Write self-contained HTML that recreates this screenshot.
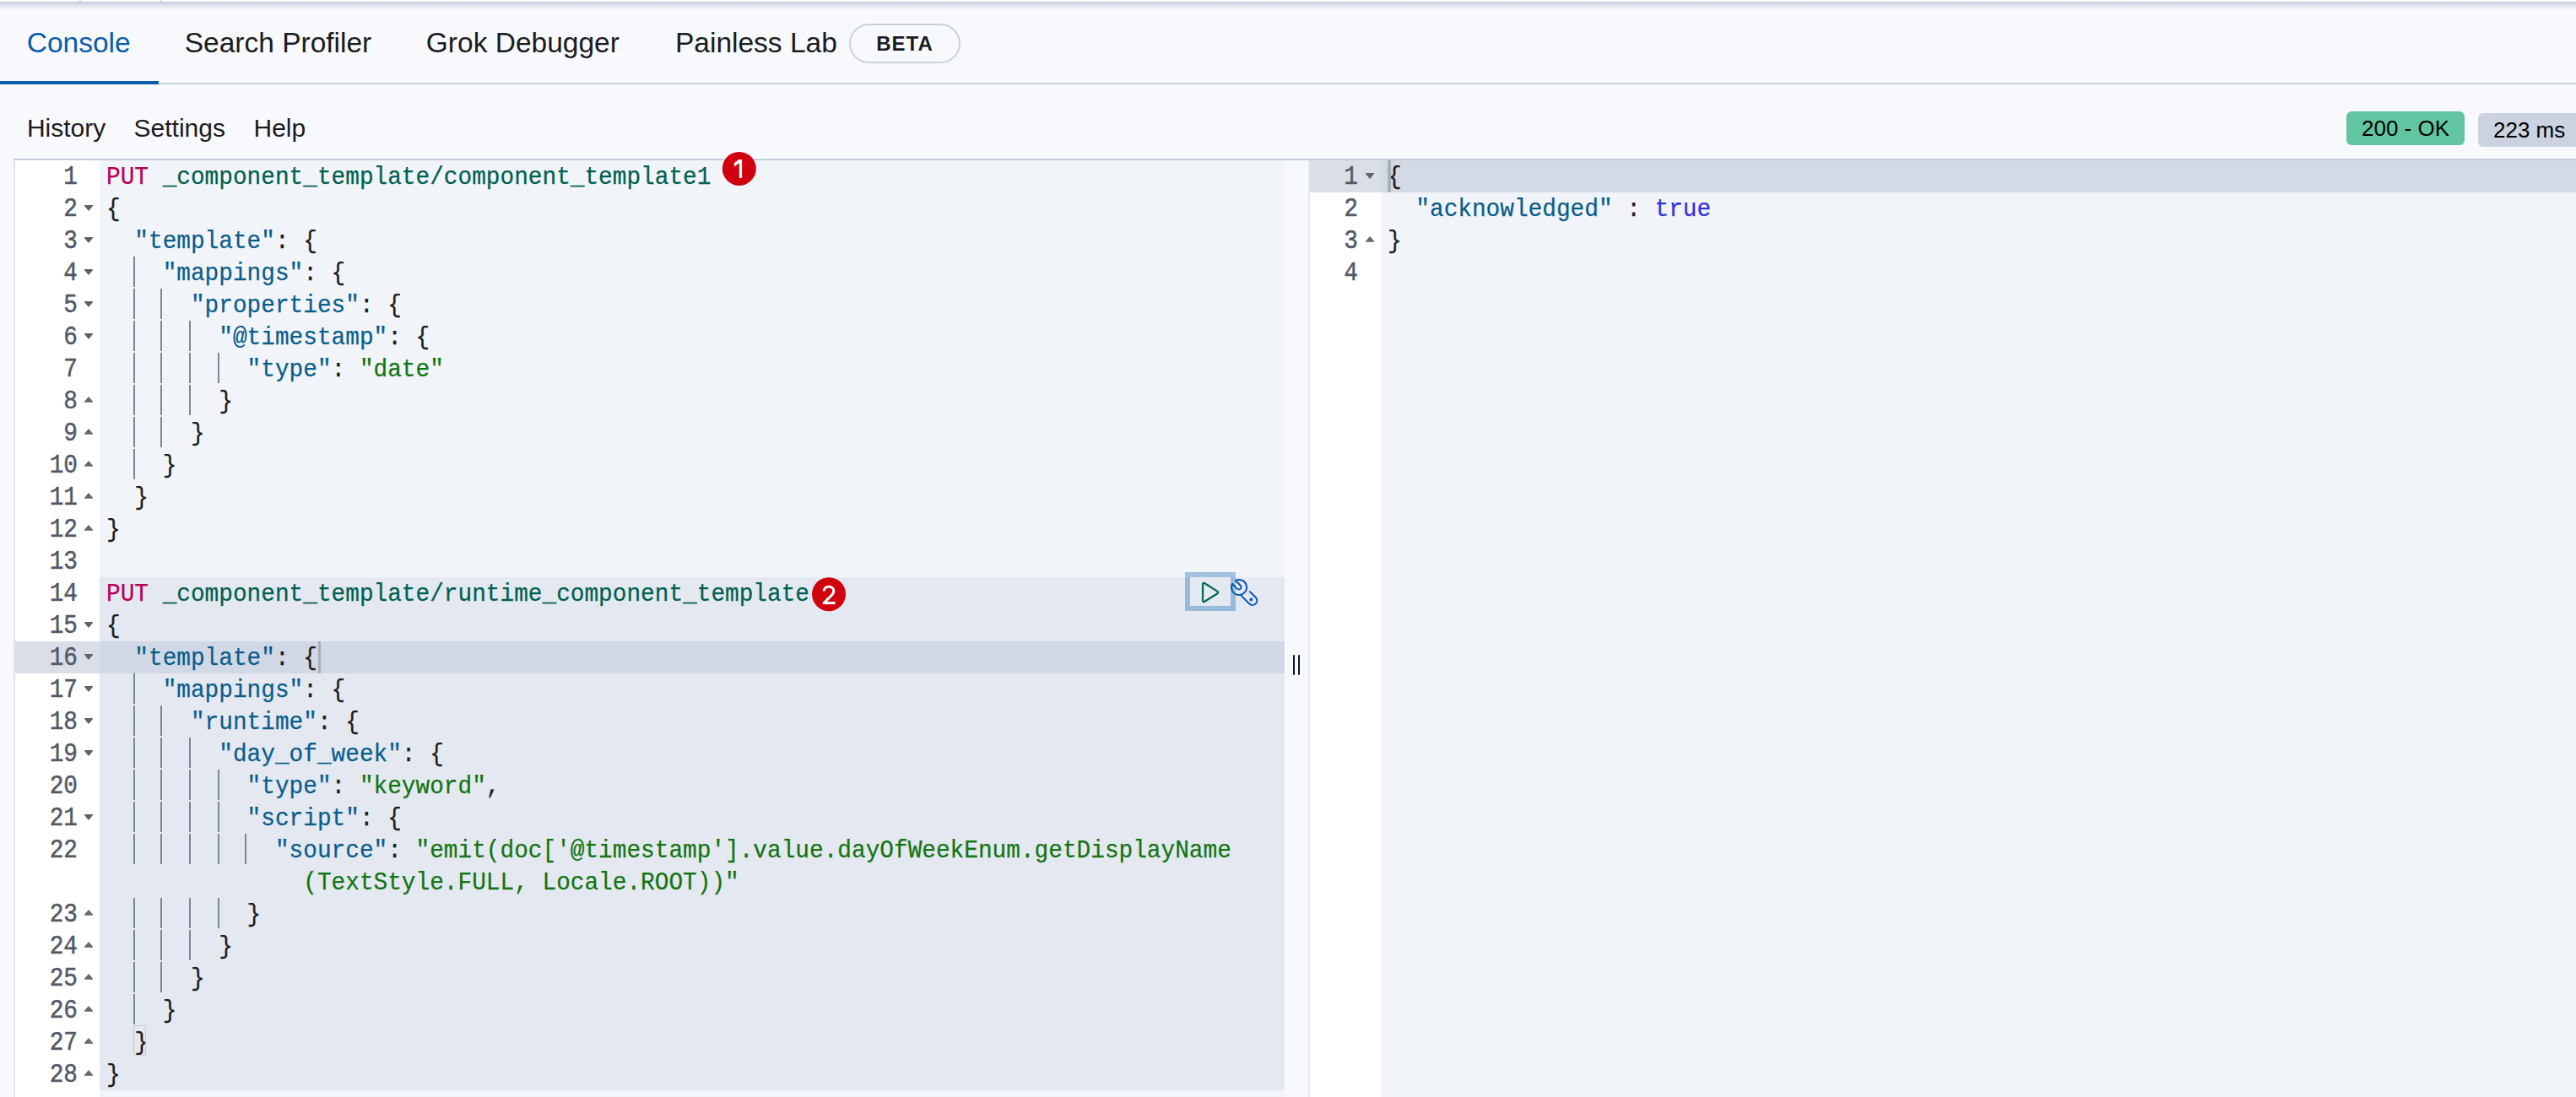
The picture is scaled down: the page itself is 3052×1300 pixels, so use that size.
<!DOCTYPE html>
<html><head><meta charset="utf-8">
<style>
*{margin:0;padding:0;box-sizing:border-box}
html,body{width:3052px;height:1300px;overflow:hidden;background:#f8f9fc;position:relative;font-family:"Liberation Sans",sans-serif}
.a{position:absolute}
.mono{-webkit-text-stroke:0.25px currentColor;font-family:"Liberation Mono",monospace;font-size:29.5px;line-height:38px;white-space:pre}
.ln{position:absolute;height:38px;left:0;top:0}
.tx{position:absolute;white-space:pre;transform-origin:0 0;transform:scaleX(0.9411)}
.num{position:absolute;width:80px;text-align:right;color:#535966;white-space:pre;transform-origin:100% 28px;transform:scale(0.9411,1.08);-webkit-text-stroke:0.45px #535a68}
.g{position:absolute;width:2px;height:36px;background:#7d879a}
.fd,.fu{position:absolute;width:12px;height:9px}
.badge{position:absolute;width:40px;height:40px;border-radius:50%;background:#d0000f;color:#fff;font-weight:bold;font-size:30px;line-height:40px;text-align:center}
</style></head><body>

<div class="a" style="left:0;top:0;width:3052px;height:3px;background:#fff"></div>
<div class="a" style="left:94px;top:0;width:2px;height:3px;background:#d3dae6"></div>
<div class="a" style="left:190px;top:0;width:2px;height:3px;background:#d3dae6"></div>
<div class="a" style="left:0;top:2px;width:3052px;height:2px;background:#c5cedc"></div>
<div class="a" style="left:0;top:4px;width:3052px;height:8px;background:linear-gradient(#d5dbe6,#f8f9fc)"></div>
<div class="a" style="left:31.7px;top:27.5px;font-size:33.5px;line-height:46px;color:#0b5cad;white-space:pre">Console</div>
<div class="a" style="left:218.7px;top:27.5px;font-size:33.5px;line-height:46px;color:#1a1c21;white-space:pre">Search Profiler</div>
<div class="a" style="left:504.8px;top:27.5px;font-size:33.5px;line-height:46px;color:#1a1c21;white-space:pre">Grok Debugger</div>
<div class="a" style="left:800.0px;top:27.5px;font-size:33.5px;line-height:46px;color:#1a1c21;white-space:pre">Painless Lab</div>
<div class="a" style="left:1006px;top:28px;width:132px;height:47px;border:2px solid #c9d1df;border-radius:24px;font-weight:bold;font-size:24px;line-height:43px;text-align:center;color:#1a1c21;letter-spacing:1px">BETA</div>
<div class="a" style="left:0;top:98px;width:3052px;height:2px;background:#c9d1df"></div>
<div class="a" style="left:0;top:96px;width:188px;height:4px;background:#0b5cad"></div>
<div class="a" style="left:31.9px;top:131.5px;font-size:30px;line-height:40px;color:#1a1c21;white-space:pre">History</div>
<div class="a" style="left:158.6px;top:131.5px;font-size:30px;line-height:40px;color:#1a1c21;white-space:pre">Settings</div>
<div class="a" style="left:300.5px;top:131.5px;font-size:30px;line-height:40px;color:#1a1c21;white-space:pre">Help</div>
<div class="a" style="left:2780px;top:132px;width:140px;height:40px;border-radius:6px;background:#61c5a2;color:#000;font-size:26px;line-height:40px;text-align:center;white-space:pre">200 - OK</div>
<div class="a" style="left:2936px;top:134px;width:130px;height:40px;border-radius:6px;background:#cbd2e0;color:#000;font-size:26px;line-height:40px;white-space:pre;padding-left:18px">223 ms</div>
<div class="a" style="left:16px;top:188px;width:3036px;height:2px;background:#c6cfdd"></div>
<div class="a" style="left:16px;top:190px;width:2px;height:1110px;background:#e0e5ed"></div>
<div class="a" style="left:18px;top:190px;width:100px;height:1110px;background:#fff"></div>
<div class="a" style="left:118px;top:190px;width:1404px;height:1110px;background:#f1f4f9"></div>
<div class="a" style="left:118px;top:684px;width:1404px;height:608px;background:#e4e8f0"></div>
<div class="a" style="left:18px;top:760px;width:100px;height:38px;background:#d9dee8"></div>
<div class="a" style="left:118px;top:760px;width:1404px;height:38px;background:#d1d8e5"></div>
<div class="a" style="left:1550px;top:190px;width:2px;height:1110px;background:#e3e7ef"></div>
<div class="a" style="left:1552px;top:190px;width:84px;height:1110px;background:#fff"></div>
<div class="a" style="left:1636px;top:190px;width:1416px;height:1110px;background:#f1f4f9"></div>
<div class="a" style="left:1552px;top:190px;width:84px;height:38px;background:#d9dee8"></div>
<div class="a" style="left:1636px;top:190px;width:1416px;height:38px;background:#d3dae6"></div>
<div class="mono num" style="left:12px;top:191.0px">1</div>
<div class="mono tx" style="left:126.00px;top:191.0px"><span style="color:#b9005a">PUT</span><span style="color:#1a1c21"> </span><span style="color:#00604f">_component_template/component_template1</span></div>
<div class="mono num" style="left:12px;top:229.0px">2</div>
<svg class="fd" style="left:99px;top:242.4px" width="12" height="9" viewBox="0 0 12 9"><path d="M1.5 1.5 L10.5 1.5 L6 7 Z" fill="#626262" stroke="#626262" stroke-width="1.2" stroke-linejoin="round"/></svg>
<div class="mono tx" style="left:126.00px;top:229.0px"><span style="color:#1a1c21">{</span></div>
<div class="mono num" style="left:12px;top:267.0px">3</div>
<svg class="fd" style="left:99px;top:280.4px" width="12" height="9" viewBox="0 0 12 9"><path d="M1.5 1.5 L10.5 1.5 L6 7 Z" fill="#626262" stroke="#626262" stroke-width="1.2" stroke-linejoin="round"/></svg>
<div class="mono tx" style="left:126.00px;top:267.0px"><span style="color:#1a1c21">  </span><span style="color:#0a5d8c">&quot;template&quot;</span><span style="color:#1a1c21">: {</span></div>
<div class="mono num" style="left:12px;top:305.0px">4</div>
<svg class="fd" style="left:99px;top:318.4px" width="12" height="9" viewBox="0 0 12 9"><path d="M1.5 1.5 L10.5 1.5 L6 7 Z" fill="#626262" stroke="#626262" stroke-width="1.2" stroke-linejoin="round"/></svg>
<div class="g" style="left:158px;top:304px"></div>
<div class="mono tx" style="left:126.00px;top:305.0px"><span style="color:#1a1c21">    </span><span style="color:#0a5d8c">&quot;mappings&quot;</span><span style="color:#1a1c21">: {</span></div>
<div class="mono num" style="left:12px;top:343.0px">5</div>
<svg class="fd" style="left:99px;top:356.4px" width="12" height="9" viewBox="0 0 12 9"><path d="M1.5 1.5 L10.5 1.5 L6 7 Z" fill="#626262" stroke="#626262" stroke-width="1.2" stroke-linejoin="round"/></svg>
<div class="g" style="left:158px;top:342px"></div>
<div class="g" style="left:190px;top:342px"></div>
<div class="mono tx" style="left:126.00px;top:343.0px"><span style="color:#1a1c21">      </span><span style="color:#0a5d8c">&quot;properties&quot;</span><span style="color:#1a1c21">: {</span></div>
<div class="mono num" style="left:12px;top:381.0px">6</div>
<svg class="fd" style="left:99px;top:394.4px" width="12" height="9" viewBox="0 0 12 9"><path d="M1.5 1.5 L10.5 1.5 L6 7 Z" fill="#626262" stroke="#626262" stroke-width="1.2" stroke-linejoin="round"/></svg>
<div class="g" style="left:158px;top:380px"></div>
<div class="g" style="left:190px;top:380px"></div>
<div class="g" style="left:224px;top:380px"></div>
<div class="mono tx" style="left:126.00px;top:381.0px"><span style="color:#1a1c21">        </span><span style="color:#0a5d8c">&quot;@timestamp&quot;</span><span style="color:#1a1c21">: {</span></div>
<div class="mono num" style="left:12px;top:419.0px">7</div>
<div class="g" style="left:158px;top:418px"></div>
<div class="g" style="left:190px;top:418px"></div>
<div class="g" style="left:224px;top:418px"></div>
<div class="g" style="left:258px;top:418px"></div>
<div class="mono tx" style="left:126.00px;top:419.0px"><span style="color:#1a1c21">          </span><span style="color:#0a5d8c">&quot;type&quot;</span><span style="color:#1a1c21">: </span><span style="color:#127512">&quot;date&quot;</span></div>
<div class="mono num" style="left:12px;top:457.0px">8</div>
<svg class="fu" style="left:99px;top:468.8px" width="12" height="9" viewBox="0 0 12 9"><path d="M1.5 7.2 L10.5 7.2 L6 1.8 Z" fill="#6a6a6a" stroke="#6a6a6a" stroke-width="1.2" stroke-linejoin="round"/></svg>
<div class="g" style="left:158px;top:456px"></div>
<div class="g" style="left:190px;top:456px"></div>
<div class="g" style="left:224px;top:456px"></div>
<div class="mono tx" style="left:126.00px;top:457.0px"><span style="color:#1a1c21">        }</span></div>
<div class="mono num" style="left:12px;top:495.0px">9</div>
<svg class="fu" style="left:99px;top:506.8px" width="12" height="9" viewBox="0 0 12 9"><path d="M1.5 7.2 L10.5 7.2 L6 1.8 Z" fill="#6a6a6a" stroke="#6a6a6a" stroke-width="1.2" stroke-linejoin="round"/></svg>
<div class="g" style="left:158px;top:494px"></div>
<div class="g" style="left:190px;top:494px"></div>
<div class="mono tx" style="left:126.00px;top:495.0px"><span style="color:#1a1c21">      }</span></div>
<div class="mono num" style="left:12px;top:533.0px">10</div>
<svg class="fu" style="left:99px;top:544.8px" width="12" height="9" viewBox="0 0 12 9"><path d="M1.5 7.2 L10.5 7.2 L6 1.8 Z" fill="#6a6a6a" stroke="#6a6a6a" stroke-width="1.2" stroke-linejoin="round"/></svg>
<div class="g" style="left:158px;top:532px"></div>
<div class="mono tx" style="left:126.00px;top:533.0px"><span style="color:#1a1c21">    }</span></div>
<div class="mono num" style="left:12px;top:571.0px">11</div>
<svg class="fu" style="left:99px;top:582.8px" width="12" height="9" viewBox="0 0 12 9"><path d="M1.5 7.2 L10.5 7.2 L6 1.8 Z" fill="#6a6a6a" stroke="#6a6a6a" stroke-width="1.2" stroke-linejoin="round"/></svg>
<div class="mono tx" style="left:126.00px;top:571.0px"><span style="color:#1a1c21">  }</span></div>
<div class="mono num" style="left:12px;top:609.0px">12</div>
<svg class="fu" style="left:99px;top:620.8px" width="12" height="9" viewBox="0 0 12 9"><path d="M1.5 7.2 L10.5 7.2 L6 1.8 Z" fill="#6a6a6a" stroke="#6a6a6a" stroke-width="1.2" stroke-linejoin="round"/></svg>
<div class="mono tx" style="left:126.00px;top:609.0px"><span style="color:#1a1c21">}</span></div>
<div class="mono num" style="left:12px;top:647.0px">13</div>
<div class="mono num" style="left:12px;top:685.0px">14</div>
<div class="mono tx" style="left:126.00px;top:685.0px"><span style="color:#b9005a">PUT</span><span style="color:#1a1c21"> </span><span style="color:#00604f">_component_template/runtime_component_template</span></div>
<div class="mono num" style="left:12px;top:723.0px">15</div>
<svg class="fd" style="left:99px;top:736.4px" width="12" height="9" viewBox="0 0 12 9"><path d="M1.5 1.5 L10.5 1.5 L6 7 Z" fill="#626262" stroke="#626262" stroke-width="1.2" stroke-linejoin="round"/></svg>
<div class="mono tx" style="left:126.00px;top:723.0px"><span style="color:#1a1c21">{</span></div>
<div class="mono num" style="left:12px;top:761.0px">16</div>
<svg class="fd" style="left:99px;top:774.4px" width="12" height="9" viewBox="0 0 12 9"><path d="M1.5 1.5 L10.5 1.5 L6 7 Z" fill="#626262" stroke="#626262" stroke-width="1.2" stroke-linejoin="round"/></svg>
<div class="mono tx" style="left:126.00px;top:761.0px"><span style="color:#1a1c21">  </span><span style="color:#0a5d8c">&quot;template&quot;</span><span style="color:#1a1c21">: {</span></div>
<div class="mono num" style="left:12px;top:799.0px">17</div>
<svg class="fd" style="left:99px;top:812.4px" width="12" height="9" viewBox="0 0 12 9"><path d="M1.5 1.5 L10.5 1.5 L6 7 Z" fill="#626262" stroke="#626262" stroke-width="1.2" stroke-linejoin="round"/></svg>
<div class="g" style="left:158px;top:798px"></div>
<div class="mono tx" style="left:126.00px;top:799.0px"><span style="color:#1a1c21">    </span><span style="color:#0a5d8c">&quot;mappings&quot;</span><span style="color:#1a1c21">: {</span></div>
<div class="mono num" style="left:12px;top:837.0px">18</div>
<svg class="fd" style="left:99px;top:850.4px" width="12" height="9" viewBox="0 0 12 9"><path d="M1.5 1.5 L10.5 1.5 L6 7 Z" fill="#626262" stroke="#626262" stroke-width="1.2" stroke-linejoin="round"/></svg>
<div class="g" style="left:158px;top:836px"></div>
<div class="g" style="left:190px;top:836px"></div>
<div class="mono tx" style="left:126.00px;top:837.0px"><span style="color:#1a1c21">      </span><span style="color:#0a5d8c">&quot;runtime&quot;</span><span style="color:#1a1c21">: {</span></div>
<div class="mono num" style="left:12px;top:875.0px">19</div>
<svg class="fd" style="left:99px;top:888.4px" width="12" height="9" viewBox="0 0 12 9"><path d="M1.5 1.5 L10.5 1.5 L6 7 Z" fill="#626262" stroke="#626262" stroke-width="1.2" stroke-linejoin="round"/></svg>
<div class="g" style="left:158px;top:874px"></div>
<div class="g" style="left:190px;top:874px"></div>
<div class="g" style="left:224px;top:874px"></div>
<div class="mono tx" style="left:126.00px;top:875.0px"><span style="color:#1a1c21">        </span><span style="color:#0a5d8c">&quot;day_of_week&quot;</span><span style="color:#1a1c21">: {</span></div>
<div class="mono num" style="left:12px;top:913.0px">20</div>
<div class="g" style="left:158px;top:912px"></div>
<div class="g" style="left:190px;top:912px"></div>
<div class="g" style="left:224px;top:912px"></div>
<div class="g" style="left:258px;top:912px"></div>
<div class="mono tx" style="left:126.00px;top:913.0px"><span style="color:#1a1c21">          </span><span style="color:#0a5d8c">&quot;type&quot;</span><span style="color:#1a1c21">: </span><span style="color:#127512">&quot;keyword&quot;</span><span style="color:#1a1c21">,</span></div>
<div class="mono num" style="left:12px;top:951.0px">21</div>
<svg class="fd" style="left:99px;top:964.4px" width="12" height="9" viewBox="0 0 12 9"><path d="M1.5 1.5 L10.5 1.5 L6 7 Z" fill="#626262" stroke="#626262" stroke-width="1.2" stroke-linejoin="round"/></svg>
<div class="g" style="left:158px;top:950px"></div>
<div class="g" style="left:190px;top:950px"></div>
<div class="g" style="left:224px;top:950px"></div>
<div class="g" style="left:258px;top:950px"></div>
<div class="mono tx" style="left:126.00px;top:951.0px"><span style="color:#1a1c21">          </span><span style="color:#0a5d8c">&quot;script&quot;</span><span style="color:#1a1c21">: {</span></div>
<div class="mono num" style="left:12px;top:989.0px">22</div>
<div class="g" style="left:158px;top:988px"></div>
<div class="g" style="left:190px;top:988px"></div>
<div class="g" style="left:224px;top:988px"></div>
<div class="g" style="left:258px;top:988px"></div>
<div class="g" style="left:290px;top:988px"></div>
<div class="mono tx" style="left:126.00px;top:989.0px"><span style="color:#1a1c21">            </span><span style="color:#0a5d8c">&quot;source&quot;</span><span style="color:#1a1c21">: </span><span style="color:#127512">&quot;emit(doc[&#x27;@timestamp&#x27;].value.dayOfWeekEnum.getDisplayName</span></div>
<div class="mono tx" style="left:126.00px;top:1027.0px"><span style="color:#1a1c21">              </span><span style="color:#127512">(TextStyle.FULL, Locale.ROOT))&quot;</span></div>
<div class="mono num" style="left:12px;top:1065.0px">23</div>
<svg class="fu" style="left:99px;top:1076.8px" width="12" height="9" viewBox="0 0 12 9"><path d="M1.5 7.2 L10.5 7.2 L6 1.8 Z" fill="#6a6a6a" stroke="#6a6a6a" stroke-width="1.2" stroke-linejoin="round"/></svg>
<div class="g" style="left:158px;top:1064px"></div>
<div class="g" style="left:190px;top:1064px"></div>
<div class="g" style="left:224px;top:1064px"></div>
<div class="g" style="left:258px;top:1064px"></div>
<div class="mono tx" style="left:126.00px;top:1065.0px"><span style="color:#1a1c21">          }</span></div>
<div class="mono num" style="left:12px;top:1103.0px">24</div>
<svg class="fu" style="left:99px;top:1114.8px" width="12" height="9" viewBox="0 0 12 9"><path d="M1.5 7.2 L10.5 7.2 L6 1.8 Z" fill="#6a6a6a" stroke="#6a6a6a" stroke-width="1.2" stroke-linejoin="round"/></svg>
<div class="g" style="left:158px;top:1102px"></div>
<div class="g" style="left:190px;top:1102px"></div>
<div class="g" style="left:224px;top:1102px"></div>
<div class="mono tx" style="left:126.00px;top:1103.0px"><span style="color:#1a1c21">        }</span></div>
<div class="mono num" style="left:12px;top:1141.0px">25</div>
<svg class="fu" style="left:99px;top:1152.8px" width="12" height="9" viewBox="0 0 12 9"><path d="M1.5 7.2 L10.5 7.2 L6 1.8 Z" fill="#6a6a6a" stroke="#6a6a6a" stroke-width="1.2" stroke-linejoin="round"/></svg>
<div class="g" style="left:158px;top:1140px"></div>
<div class="g" style="left:190px;top:1140px"></div>
<div class="mono tx" style="left:126.00px;top:1141.0px"><span style="color:#1a1c21">      }</span></div>
<div class="mono num" style="left:12px;top:1179.0px">26</div>
<svg class="fu" style="left:99px;top:1190.8px" width="12" height="9" viewBox="0 0 12 9"><path d="M1.5 7.2 L10.5 7.2 L6 1.8 Z" fill="#6a6a6a" stroke="#6a6a6a" stroke-width="1.2" stroke-linejoin="round"/></svg>
<div class="g" style="left:158px;top:1178px"></div>
<div class="mono tx" style="left:126.00px;top:1179.0px"><span style="color:#1a1c21">    }</span></div>
<div class="mono num" style="left:12px;top:1217.0px">27</div>
<svg class="fu" style="left:99px;top:1228.8px" width="12" height="9" viewBox="0 0 12 9"><path d="M1.5 7.2 L10.5 7.2 L6 1.8 Z" fill="#6a6a6a" stroke="#6a6a6a" stroke-width="1.2" stroke-linejoin="round"/></svg>
<div class="mono tx" style="left:126.00px;top:1217.0px"><span style="color:#1a1c21">  }</span></div>
<div class="mono num" style="left:12px;top:1255.0px">28</div>
<svg class="fu" style="left:99px;top:1266.8px" width="12" height="9" viewBox="0 0 12 9"><path d="M1.5 7.2 L10.5 7.2 L6 1.8 Z" fill="#6a6a6a" stroke="#6a6a6a" stroke-width="1.2" stroke-linejoin="round"/></svg>
<div class="mono tx" style="left:126.00px;top:1255.0px"><span style="color:#1a1c21">}</span></div>
<div class="a" style="left:158.3px;top:1215px;width:15px;height:36px;border:1px solid #c0c8d8;border-radius:3px"></div>
<div class="a" style="left:376.5px;top:760px;width:3.5px;height:38px;background:#a9aeb8"></div>
<svg class="a" style="left:850px;top:174px" width="52" height="52" viewBox="850 174 52 52"><circle cx="875.8" cy="199.9" r="20" fill="#d0000f"/><path d="M869.9 193.0 L875.6 188.9 L879.1 188.9 L879.1 211.0 L875.8 211.0 L875.8 193.2 L869.9 197.4 Z" fill="#fff"/></svg>
<svg class="a" style="left:956px;top:678px" width="52" height="52" viewBox="956 678 52 52"><circle cx="982" cy="704.2" r="20" fill="#d0000f"/><path d="M976.2 700.6 C976.2 697.3 978.8 695.2 982 695.2 C985.3 695.2 987.7 697.4 987.7 700.4 C987.7 702.4 986.8 703.9 985.2 705.5 L976.6 714.2" fill="none" stroke="#fff" stroke-width="3.1"/><rect x="974.8" y="713.0" width="14.7" height="3.1" fill="#fff"/></svg>
<svg class="a" style="left:1400px;top:674px" width="100" height="54" viewBox="1400 674 100 54">
<g fill="none" stroke="#0a58b4" stroke-width="2" stroke-linecap="round" stroke-linejoin="round">
<path d="M1459.97 691.93 L1465.67 697.63 A2.8 2.8 0 0 0 1469.63 693.67 L1463.93 687.97 A9 9 0 1 1 1459.97 691.93"/>
<path d="M1470.4 705.6 L1479.8 715.2 A5.4 5.4 0 0 0 1488.1 708.3 L1480.9 701.2"/>
</g>
<circle cx="1482.3" cy="710.5" r="1.9" fill="#0a58b4"/>
<rect x="1407" y="681" width="54" height="40" fill="none" stroke="rgba(0,90,170,0.32)" stroke-width="6"/>
<path d="M1425 692.5 L1425 711.5 Q1425 714 1427.3 712.8 L1442.2 703.5 Q1444 702 1442.2 700.6 L1427.3 691.2 Q1425 690 1425 692.5 Z" fill="none" stroke="#00684f" stroke-width="2.2" stroke-linejoin="round"/>
</svg>
<div class="a" style="left:1532px;top:776px;width:2.2px;height:24px;background:#111723;border-radius:1px"></div>
<div class="a" style="left:1538px;top:776px;width:2.2px;height:24px;background:#111723;border-radius:1px"></div>
<div class="mono num" style="left:1529px;top:191.0px">1</div>
<svg class="fd" style="left:1617px;top:204.4px" width="12" height="9" viewBox="0 0 12 9"><path d="M1.5 1.5 L10.5 1.5 L6 7 Z" fill="#626262" stroke="#626262" stroke-width="1.2" stroke-linejoin="round"/></svg>
<div class="mono tx" style="left:1644.00px;top:191.0px"><span style="color:#1a1c21">{</span></div>
<div class="mono num" style="left:1529px;top:229.0px">2</div>
<div class="mono tx" style="left:1644.00px;top:229.0px"><span style="color:#1a1c21">  </span><span style="color:#0a5d8c">&quot;acknowledged&quot;</span><span style="color:#1a1c21"> : </span><span style="color:#3333dd">true</span></div>
<div class="mono num" style="left:1529px;top:267.0px">3</div>
<svg class="fu" style="left:1617px;top:278.8px" width="12" height="9" viewBox="0 0 12 9"><path d="M1.5 7.2 L10.5 7.2 L6 1.8 Z" fill="#6a6a6a" stroke="#6a6a6a" stroke-width="1.2" stroke-linejoin="round"/></svg>
<div class="mono tx" style="left:1644.00px;top:267.0px"><span style="color:#1a1c21">}</span></div>
<div class="mono num" style="left:1529px;top:305.0px">4</div>
<div class="a" style="left:1644px;top:190px;width:4px;height:38px;background:#a9aeb8"></div>
</body></html>
